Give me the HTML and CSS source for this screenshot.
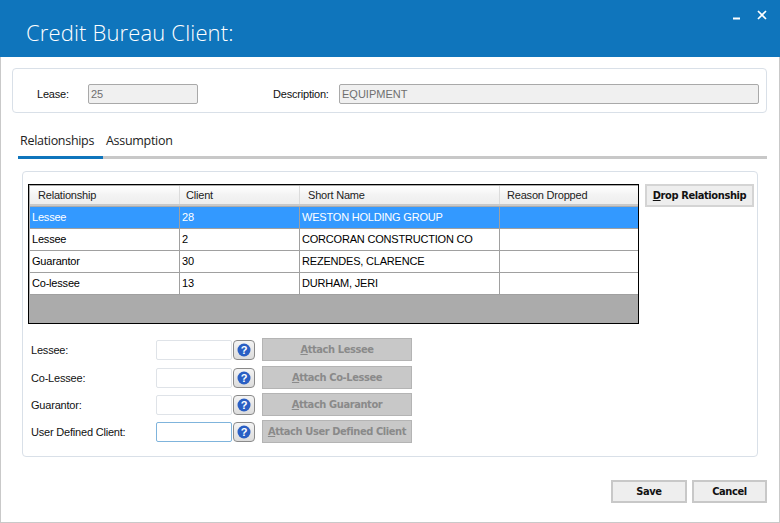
FILE: index.html
```html
<!DOCTYPE html>
<html lang="en">
<head>
<meta charset="utf-8">
<title>Credit Bureau Client</title>
<link rel="stylesheet" href="styles.css">
</head>
<body>
<div class="window">
  <header class="titlebar">
    <h1 class="title">Credit Bureau Client:</h1>
    <div class="winctl">
      <svg class="ctl-min" width="8" height="3" viewBox="0 0 8 3"><rect width="7" height="2" y="0.5" fill="#fff"/></svg>
      <svg class="ctl-close" width="10" height="10" viewBox="0 0 10 10"><path d="M1 1l8 8M9 1l-8 8" stroke="#fff" stroke-width="1.7" fill="none"/></svg>
    </div>
  </header>
  <main class="content">
    <section class="lease-panel">
      <label class="lbl lease-lbl">Lease:</label>
      <div class="ro ro-lease">25</div>
      <label class="lbl desc-lbl">Description:</label>
      <div class="ro ro-desc">EQUIPMENT</div>
    </section>
    <nav class="tabs">
      <span class="tab active">Relationships</span>
      <span class="tab second">Assumption</span>
    </nav>
    <section class="rel-panel">
      <div class="grid-row-top">
        <div class="grid">
          <div class="cell-row head">
            <div class="c c1">Relationship</div><div class="c c2">Client</div><div class="c c3">Short Name</div><div class="c c4">Reason Dropped</div>
          </div>
          <div class="cell-row data selected">
            <div class="c c1">Lessee</div><div class="c c2">28</div><div class="c c3">WESTON HOLDING GROUP</div><div class="c c4"></div>
          </div>
          <div class="cell-row data">
            <div class="c c1">Lessee</div><div class="c c2">2</div><div class="c c3">CORCORAN CONSTRUCTION CO</div><div class="c c4"></div>
          </div>
          <div class="cell-row data">
            <div class="c c1">Guarantor</div><div class="c c2">30</div><div class="c c3">REZENDES, CLARENCE</div><div class="c c4"></div>
          </div>
          <div class="cell-row data">
            <div class="c c1">Co-lessee</div><div class="c c2">13</div><div class="c c3">DURHAM, JERI</div><div class="c c4"></div>
          </div>
        </div>
        <button class="btn drop"><u>D</u>rop Relationship</button>
      </div>
      <div class="attach-form">
        <div class="attach-row">
          <span class="lbl name">Lessee:</span>
          <span class="field"></span>
          <span class="help"><svg width="14" height="14" viewBox="0 0 14 14"><circle cx="7" cy="7" r="6.5" fill="#2a5fc4"/></svg><b>?</b></span>
          <button class="btn attach" disabled><u>A</u>ttach Lessee</button>
        </div>
        <div class="attach-row">
          <span class="lbl name">Co-Lessee:</span>
          <span class="field"></span>
          <span class="help"><svg width="14" height="14" viewBox="0 0 14 14"><circle cx="7" cy="7" r="6.5" fill="#2a5fc4"/></svg><b>?</b></span>
          <button class="btn attach" disabled><u>A</u>ttach Co-Lessee</button>
        </div>
        <div class="attach-row">
          <span class="lbl name">Guarantor:</span>
          <span class="field"></span>
          <span class="help"><svg width="14" height="14" viewBox="0 0 14 14"><circle cx="7" cy="7" r="6.5" fill="#2a5fc4"/></svg><b>?</b></span>
          <button class="btn attach" disabled><u>A</u>ttach Guarantor</button>
        </div>
        <div class="attach-row">
          <span class="lbl name">User Defined Client:</span>
          <span class="field focus"></span>
          <span class="help"><svg width="14" height="14" viewBox="0 0 14 14"><circle cx="7" cy="7" r="6.5" fill="#2a5fc4"/></svg><b>?</b></span>
          <button class="btn attach" disabled><u>A</u>ttach User Defined Client</button>
        </div>
      </div>
    </section>
    <footer class="actions">
      <button class="btn action">Save</button>
      <button class="btn action">Cancel</button>
    </footer>
  </main>
</div>
</body>
</html>
```
FILE: styles.css
```css
* { box-sizing: border-box; }
html, body { margin: 0; padding: 0; }
body {
  width: 780px;
  height: 523px;
  overflow: hidden;
  background: #fff;
  font-family: "Liberation Sans", sans-serif;
  font-size: 11px;
  color: #111;
}
.window { width: 780px; height: 523px; display: flex; flex-direction: column; }
.titlebar {
  height: 57px;
  flex: none;
  background: #0f75bc;
  display: flex;
  justify-content: space-between;
  padding: 0 13px 0 26px;
}
.title {
  margin: 0;
  padding-top: 14px;
  font-family: "Open Sans", sans-serif;
  font-weight: 300;
  font-size: 22px;
  letter-spacing: 0.15px;
  line-height: 36px;
  color: #fff;
}
.winctl { display: flex; gap: 16px; padding-top: 10px; align-items: flex-start; }
.ctl-min { margin-top: 7px; }
.content {
  flex: 1;
  border: 1px solid #c9c9c9;
  border-top: 0;
  padding: 11px 12px 0 11px;
  display: flex;
  flex-direction: column;
}
.lbl { font-family: "Liberation Sans", sans-serif; font-size: 11px; letter-spacing: -0.2px; color: #111; }
.lease-panel {
  height: 45px;
  flex: none;
  border: 1px solid #d9e0e8;
  border-radius: 4px;
  display: flex;
  align-items: flex-start;
  padding-top: 15px;
}
.lease-panel .lbl { line-height: 20px; }
.lease-lbl { margin-left: 24px; width: 51px; }
.ro {
  height: 20px;
  border: 1px solid #a9a9a9;
  border-radius: 2px;
  background: #f0f0f0;
  color: #6f6f6f;
  padding-left: 2px;
  font-family: "Liberation Sans", sans-serif;
  font-size: 11px;
  line-height: 18px;
}
.ro-lease { width: 110px; }
.desc-lbl { margin-left: 75px; width: 66px; }
.ro-desc { width: 420px; }
.tabs {
  margin: 17px 0 0 6px;
  height: 29px;
  flex: none;
  display: flex;
  border-bottom: 3px solid #c8c8c8;
}
.tab {
  font-family: "Open Sans", sans-serif;
  font-size: 12.5px;
  letter-spacing: -0.3px;
  line-height: 21px;
  color: #222;
  height: 29px;
}
.tab.active { width: 85px; padding-left: 2px; border-bottom: 3px solid #0f75bc; }
.tab.second { width: 78px; padding-left: 3px; }
.rel-panel {
  margin: 12px 0 0 10px;
  width: 736px;
  height: 286px;
  flex: none;
  border: 1px solid #d9e0e8;
  border-radius: 4px;
  padding: 12px 0 0 5px;
}
.grid-row-top { display: flex; align-items: flex-start; gap: 6px; }
.grid {
  width: 611px;
  height: 140px;
  background: #ababab;
  border: 1px solid #000;
  padding: 1px 0 0 1px;
}
.cell-row { display: grid; grid-template-columns: 150px 120px 200px 1fr; }
.head {
  height: 20px;
  background: linear-gradient(#fff, #f3f3f3 50%, #eeeeee);
  border-bottom: 2px solid #c9c9c9;
  margin-bottom: 1px;
}
.head .c { padding-left: 8px; border-right: 1px solid #dcdcdc; line-height: 19px; color: #222; }
.head .c2 { padding-left: 6px; }
.head .c4 { border-right: 0; padding-left: 7px; }
.c { font-family: "Liberation Sans", sans-serif; font-size: 11px; letter-spacing: -0.2px; white-space: nowrap; overflow: hidden; }
.data { height: 22px; background: #fff; border-bottom: 1px solid #a0a0a0; }
.data .c { padding: 0 0 0 2px; line-height: 21px; border-right: 1px solid #a0a0a0; color: #000; }
.data .c4 { border-right: 0; }
.selected { background: #3399ff; }
.data.selected .c { color: #fff; }
.btn {
  font-family: "DejaVu Sans Condensed", "Liberation Sans", sans-serif;
  font-weight: 700;
  font-size: 11px;
  letter-spacing: -0.4px;
  white-space: nowrap;
  padding: 0;
  border: 1px solid #c4c4c4;
  background: #eeeeee;
  color: #111;
  height: 23px;
}
.drop { width: 109px; height: 23px; border-width: 2px; border-color: #d4d4d4; }
.attach-form { margin-top: 14px; display: flex; flex-direction: column; gap: 4px; }
.attach-row { display: flex; align-items: center; height: 23px; }
.attach-row:first-child { margin-bottom: 1px; }
.name { width: 128px; padding-left: 3px; flex: none; }
.field {
  width: 76px;
  height: 20px;
  flex: none;
  border: 1px solid #dfe3e8;
  border-radius: 2px;
  background: #fff;
}
.field.focus { border-color: #7fb4dc; }
.help {
  position: relative;
  width: 22px;
  height: 20px;
  margin-left: 1px;
  flex: none;
  border: 1px solid #8a8a8a;
  border-radius: 4px;
  background: linear-gradient(#f4f4f4, #dcdcdc);
  display: flex;
  align-items: center;
  justify-content: center;
}
.help b {
  position: absolute;
  inset: 0;
  text-align: center;
  color: #fff;
  font-family: "Liberation Sans", sans-serif;
  font-size: 11px;
  font-weight: 700;
  line-height: 18px;
}
.attach {
  width: 150px;
  margin-left: 7px;
  background: #c8c8c8;
  border: 1px solid #b4b4b4;
  color: #8a8a8a;
}
.actions { margin-top: 23px; display: flex; justify-content: flex-end; gap: 5px; }
.action { width: 76px; height: 23px; border-width: 2px; border-color: #c8c8c8; }
.action + .action { width: 75px; }
```
